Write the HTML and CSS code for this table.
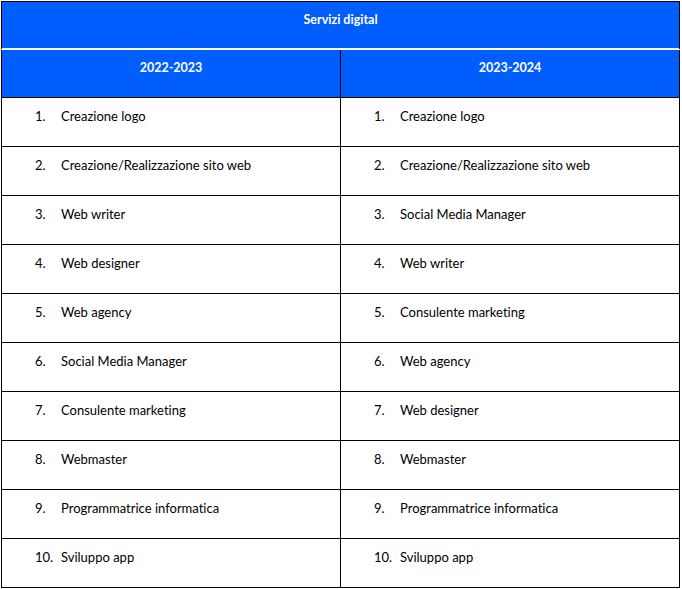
FILE: index.html
```html
<!DOCTYPE html>
<html>
<head>
<meta charset="utf-8">
<link rel="stylesheet" href="styles.css">
</head>
<body>
<table class="services">
  <thead>
    <tr class="title-row"><th colspan="2">Servizi digital</th></tr>
    <tr class="year-row"><th>2022-2023</th><th>2023-2024</th></tr>
  </thead>
  <tbody>
    <tr><td><span class="num">1.</span><span>Creazione logo</span></td><td><span class="num">1.</span><span>Creazione logo</span></td></tr>
    <tr><td><span class="num">2.</span><span>Creazione/Realizzazione sito web</span></td><td><span class="num">2.</span><span>Creazione/Realizzazione sito web</span></td></tr>
    <tr><td><span class="num">3.</span><span>Web writer</span></td><td><span class="num">3.</span><span>Social Media Manager</span></td></tr>
    <tr><td><span class="num">4.</span><span>Web designer</span></td><td><span class="num">4.</span><span>Web writer</span></td></tr>
    <tr><td><span class="num">5.</span><span>Web agency</span></td><td><span class="num">5.</span><span>Consulente marketing</span></td></tr>
    <tr><td><span class="num">6.</span><span>Social Media Manager</span></td><td><span class="num">6.</span><span>Web agency</span></td></tr>
    <tr><td><span class="num">7.</span><span>Consulente marketing</span></td><td><span class="num">7.</span><span>Web designer</span></td></tr>
    <tr><td><span class="num">8.</span><span>Webmaster</span></td><td><span class="num">8.</span><span>Webmaster</span></td></tr>
    <tr><td><span class="num">9.</span><span>Programmatrice informatica</span></td><td><span class="num">9.</span><span>Programmatrice informatica</span></td></tr>
    <tr><td><span class="num">10.</span><span>Sviluppo app</span></td><td><span class="num">10.</span><span>Sviluppo app</span></td></tr>
  </tbody>
</table>
</body>
</html>
```
FILE: styles.css
```css
html, body {
  margin: 0;
  padding: 0;
  background: #ffffff;
}
body {
  padding: 1px 0 0 1px;
  font-family: Lato, "Open Sans", sans-serif;
  font-size: 13px;
  color: #000;
  font-variant-ligatures: none;
}
.services {
  border-collapse: collapse;
  width: 679px;
  table-layout: fixed;
}
.services th,
.services td {
  border: 1.5px solid #000;
  vertical-align: top;
  box-sizing: border-box;
}
.services th {
  background: #005efe;
  color: #fff;
  font-weight: 700;
  text-align: center;
  height: 48px;
  padding: 10px 0 0;
  font-size: 12.5px;
}
.title-row th {
  border-bottom: 1px solid #fff;
  box-shadow: inset 0 -1px 0 #fff;
}
.year-row th {
  border-top: 1.5px solid #000;
}
.services td {
  height: 49px;
  padding: 10px 0 0 33px;
  width: 50%;
}
.services td .num {
  display: inline-block;
  width: 26px;
}
```
